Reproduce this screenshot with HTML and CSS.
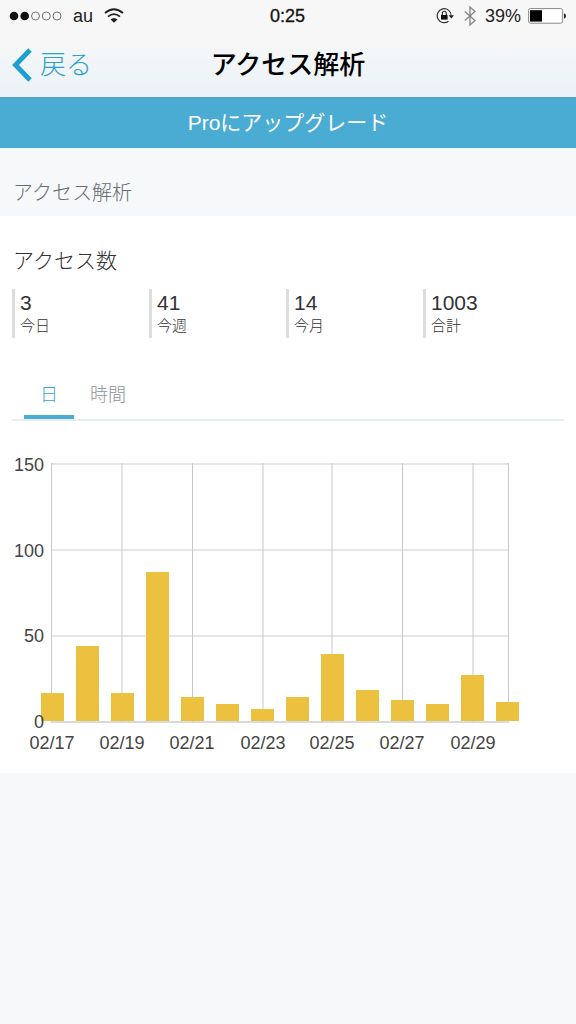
FILE: index.html
```html
<!DOCTYPE html>
<html lang="ja">
<head>
<meta charset="utf-8">
<meta name="viewport" content="width=device-width, initial-scale=1">
<title>アクセス解析</title>
<link rel="stylesheet" href="styles.css">
</head>
<body>
	<header class="top">
		<div class="status">
			<div class="status-left">
				<svg class="signal" width="53" height="10" viewBox="0 0 53 10">
					<circle cx="5" cy="5" r="4.3" fill="#111"/>
					<circle cx="15.7" cy="5" r="4.3" fill="#111"/>
					<g fill="none" stroke="#777">
						<circle cx="26.5" cy="5" r="4"/>
						<circle cx="37.3" cy="5" r="4"/>
						<circle cx="48" cy="5" r="4"/>
					</g>
				</svg>
				<span>au</span>
				<svg width="20" height="16" viewBox="0 0 20 16" fill="none" stroke="#222" stroke-width="1.8">
					<path d="M1 5Q10-2.5 19 5M4 8.6Q10 3.6 16 8.6"/>
					<path d="M6.5 11.6Q10 8.4 13.5 11.6L10 14.8Z" fill="#222" stroke="none"/>
				</svg>
			</div>
			<span class="clock">0:25</span>
			<div class="status-right">
				<svg width="18" height="18" viewBox="0 0 18 18">
					<path d="M15.2 8.5A7 7 0 1 0 12.5 14.2" fill="none" stroke="#333" stroke-width="1.2"/>
					<path d="M12.6 8.2H18L15.3 11.5Z" fill="#222"/>
					<rect x="5" y="8" width="6.6" height="4.6" fill="#111"/>
					<path d="M6.3 8V6.3a2 2 0 0 1 4 0V8" fill="none" stroke="#222" stroke-width="1.1"/>
				</svg>
				<svg class="bluetooth" width="12" height="20" viewBox="0 0 12 20">
					<path d="M.8 5.5 11 14.5 6 19V1L11 5.5.8 14.5" fill="none" stroke="#888" stroke-width="1.4"/>
				</svg>
				<span>39%</span>
				<svg width="38" height="16" viewBox="0 0 38 16">
					<rect x=".6" y=".6" width="34" height="14.6" rx="2" fill="#fff" stroke="#888"/>
					<rect x="2" y="2.2" width="12" height="11.4" fill="#000"/>
					<path d="M36 5.2q2 .6 2 2.8t-2 2.8z" fill="#222"/>
				</svg>
			</div>
		</div>
		<nav class="nav">
			<a class="back" href="#">
				<svg width="20" height="34" viewBox="0 0 20 34">
					<path d="M18 2 3.5 17 18 32" fill="none" stroke="#1e9fd0" stroke-width="4.8"/>
				</svg>
				戻る
			</a>
			<h1>アクセス解析</h1>
		</nav>
	</header>
	<a class="upgrade" href="#">Proにアップグレード</a>
	<main>
		<h2 class="section-title">アクセス解析</h2>
		<section class="panel">
			<h3>アクセス数</h3>
			<dl class="stats">
				<div class="stat"><dd>3</dd><dt>今日</dt></div>
				<div class="stat"><dd>41</dd><dt>今週</dt></div>
				<div class="stat"><dd>14</dd><dt>今月</dt></div>
				<div class="stat"><dd>1003</dd><dt>合計</dt></div>
			</dl>
			<div class="tabs">
				<button type="button" class="tab active">日</button>
				<button type="button" class="tab">時間</button>
			</div>
			<svg class="chart" viewBox="0 0 576 352">
				<g stroke="#e6e6e6" stroke-width="2">
					<path d="M51 43H509M51 129H509M51 215H509"/>
					<path d="M51 301H509" stroke="#dadada"/>
				</g>
				<path class="grid-v" d="M51.5 42V301M122 42V301M192.5 42V301M263 42V301M332 42V301M402.5 42V301M473 42V301M508.5 42V301"/>
				<g class="bars">
					<rect x="41" y="272" width="23" height="28"/>
					<rect x="76" y="225" width="23" height="75"/>
					<rect x="111" y="272" width="23" height="28"/>
					<rect x="146" y="151" width="23" height="149"/>
					<rect x="181" y="276" width="23" height="24"/>
					<rect x="216" y="283" width="23" height="17"/>
					<rect x="251" y="288" width="23" height="12"/>
					<rect x="286" y="276" width="23" height="24"/>
					<rect x="321" y="233" width="23" height="67"/>
					<rect x="356" y="269" width="23" height="31"/>
					<rect x="391" y="279" width="23" height="21"/>
					<rect x="426" y="283" width="23" height="17"/>
					<rect x="461" y="254" width="23" height="46"/>
					<rect x="496" y="281" width="23" height="19"/>
				</g>
				<g class="axis-y">
					<text x="44" y="50">150</text>
					<text x="44" y="136">100</text>
					<text x="44" y="221">50</text>
					<text x="44" y="307">0</text>
				</g>
				<g class="axis-x">
					<text x="52" y="328">02/17</text>
					<text x="122" y="328">02/19</text>
					<text x="192" y="328">02/21</text>
					<text x="263" y="328">02/23</text>
					<text x="332" y="328">02/25</text>
					<text x="402" y="328">02/27</text>
					<text x="473" y="328">02/29</text>
				</g>
			</svg>
		</section>
	</main>
</body>
</html>
```
FILE: styles.css
```css
* {
	box-sizing: border-box;
}
body {
	margin: 0;
	min-height: 100vh;
	background-color: #f6f8fa;
	color: #333;
	font-family: "Liberation Sans", "Noto Sans CJK JP", sans-serif;
}
h1, h2, h3, dl, dd {
	margin: 0;
	font-weight: normal;
}
a {
	text-decoration: none;
}
.top {
	background: linear-gradient(#f7f7f7 40%, #eaf2f7);
	border-bottom: 1px solid #5a9dc0;
}
.status {
	display: grid;
	grid-template-columns: 1fr auto 1fr;
	align-items: center;
	height: 32px;
	padding: 0 10px 0 9px;
	font-size: 18px;
	color: #222;
}
.status-left, .status-right {
	display: flex;
	align-items: center;
	gap: 11px;
}
.status-right {
	justify-content: flex-end;
	gap: 7px;
}
.bluetooth {
	margin: 0 2px 0 3px;
}
.clock {
	color: #111;
	-webkit-text-stroke: 0.3px #111;
}
.nav {
	display: grid;
	grid-template-columns: 1fr auto 1fr;
	align-items: center;
	height: 65px;
	padding: 0 12px;
}
.nav h1 {
	font-size: 26px;
	font-weight: 500;
	line-height: 40px;
	color: #000;
}
.back {
	display: flex;
	align-items: center;
	gap: 8px;
	font-size: 26px;
	font-weight: 300;
	line-height: 40px;
	color: #2a9fd0;
}
.upgrade {
	display: block;
	font-size: 21px;
	line-height: 50px;
	text-align: center;
	color: #fff;
	background-color: #4aabd3;
}
.section-title {
	padding: 29px 13px 7px;
	font-size: 20px;
	font-weight: 300;
	line-height: 32px;
	color: #666c74;
}
.panel {
	background-color: #fff;
}
.panel h3 {
	padding: 29px 13px 12px;
	font-size: 21px;
	font-weight: 300;
	line-height: 32px;
	color: #333;
}
.stats {
	display: grid;
	grid-template-columns: repeat(4, 1fr);
	padding: 0 16px 0 12px;
}
.stat {
	padding: 2px 0 1px 5px;
	border-left: 3px solid #ddd;
}
.stat dd {
	font-size: 21px;
	line-height: 24px;
}
.stat dt {
	font-size: 15px;
	font-weight: 300;
	line-height: 22px;
}
.tabs {
	display: flex;
	margin: 32px 12px 0;
	padding-left: 12px;
	border-bottom: 2px solid #e6eeee;
}
.tab {
	height: 49px;
	padding: 0 16px;
	border: 0;
	border-bottom: 4px solid transparent;
	background: none;
	font-family: inherit;
	font-size: 18px;
	font-weight: 300;
	color: #8c959c;
	cursor: pointer;
}
.tab.active {
	color: #36a5d0;
	border-bottom-color: #4aabd3;
}
.chart {
	display: block;
	width: 100%;
	height: auto;
	font-size: 18px;
}
.chart text {
	fill: #444;
}
.grid-v {
	fill: none;
	stroke: #c8c8c8;
}
.bars {
	fill: #ecc140;
}
.axis-y {
	text-anchor: end;
}
.axis-x {
	text-anchor: middle;
}
```
